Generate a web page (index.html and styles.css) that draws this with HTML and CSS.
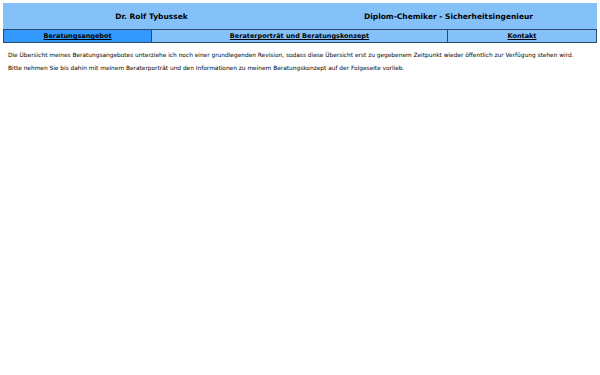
FILE: index.html
```html
<!DOCTYPE html>
<html lang="de">
<head>
    <meta charset="UTF-8">
    <meta name="viewport" content="width=device-width, initial-scale=1.0">
    <title>Dr. Rolf Tybussek - Beratungsangebot</title>
    <link rel="stylesheet" href="styles.css">
</head>
<body>
    <header class="header">
        <div class="title-row">
            <div class="title">Dr. Rolf Tybussek</div>
            <div class="title">Diplom-Chemiker - Sicherheitsingenieur</div>
        </div>
        <nav class="nav">
            <a href="#" class="nav-item nav-first active">Beratungsangebot</a>
            <a href="#" class="nav-item nav-middle">Beraterporträt und Beratungskonzept</a>
            <a href="#" class="nav-item nav-last">Kontakt</a>
        </nav>
    </header>

    <main class="content">
        <p>Die Übersicht meines Beratungsangebotes unterziehe ich noch einer grundlegenden Revision, sodass diese Übersicht erst zu gegebenem Zeitpunkt wieder öffentlich zur Verfügung stehen wird.</p>
        <p>Bitte nehmen Sie bis dahin mit meinem Beraterporträt und den Informationen zu meinem Beratungskonzept auf der Folgeseite vorlieb.</p>
    </main>
</body>
</html>
```

FILE: styles.css
```css
* {
    margin: 0;
    padding: 0;
    box-sizing: border-box;
}

body {
    font-family: "DejaVu Sans", Verdana, sans-serif;
    background-color: #ffffff;
    color: #000000;
    padding: 3px;
}

.header {
    background-color: #85c1f9;
}

.title-row {
    display: flex;
    height: 26px;
    align-items: center;
}

.title {
    flex: 1;
    text-align: center;
    font-size: 7.5px;
    font-weight: bold;
}

.nav {
    display: flex;
    border: 1px solid #2c4a6e;
    height: 14px;
}

.nav-item {
    display: flex;
    align-items: center;
    justify-content: center;
    font-size: 6.5px;
    font-weight: bold;
    color: #000000;
    text-decoration: underline;
}

.nav-first {
    width: 148px;
    border-right: 1px solid #2c4a6e;
}

.nav-middle {
    width: 296px;
    border-right: 1px solid #2c4a6e;
}

.nav-last {
    flex: 1;
}

.active {
    background-color: #3399ff;
}

.content {
    padding: 9px 5px;
    font-size: 5.85px;
    line-height: 7px;
}

.content p {
    margin-bottom: 6px;
}
```
